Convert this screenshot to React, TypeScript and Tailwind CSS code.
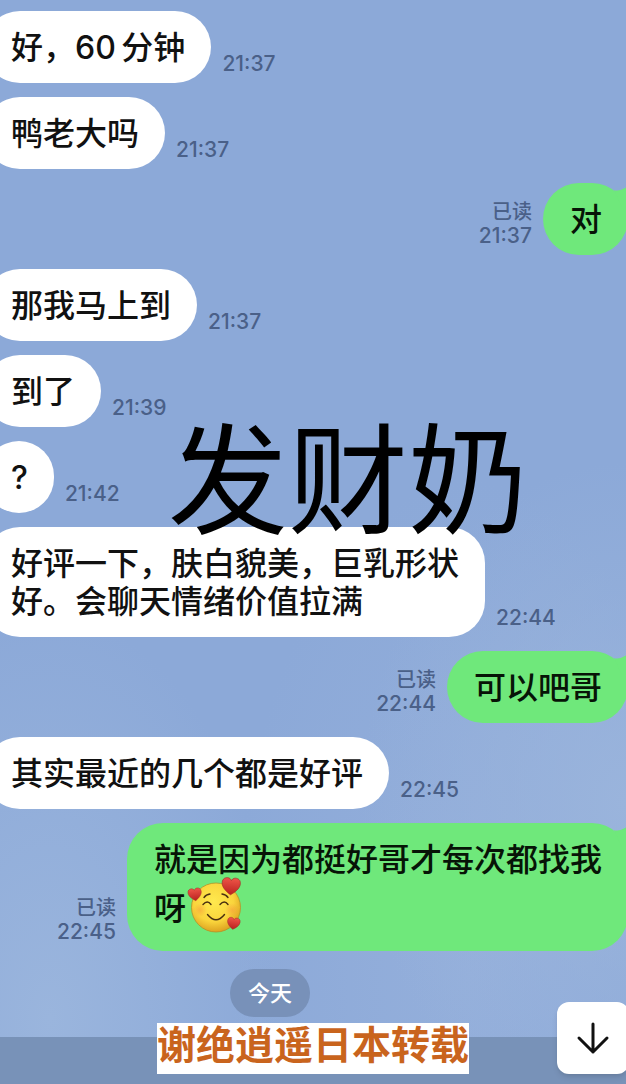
import React from "react";

interface Message {
  text: string;
  time: string;
  mine?: boolean;
  emoji?: boolean;
}

const messages: Message[] = [
  { text: "好，60\u2009分钟", time: "21:37" },
  { text: "鸭老大吗", time: "21:37" },
  { text: "对", time: "21:37", mine: true },
  { text: "那我马上到", time: "21:37" },
  { text: "到了", time: "21:39" },
  { text: "?", time: "21:42" },
  { text: "好评一下，肤白貌美，巨乳形状好。会聊天情绪价值拉满", time: "22:44" },
  { text: "可以吧哥", time: "22:44", mine: true },
  { text: "其实最近的几个都是好评", time: "22:45" },
  { text: "就是因为都挺好哥才每次都找我呀", time: "22:45", mine: true, emoji: true },
];

const HEART =
  "M0 6 C-3 4 -7 1 -7 -3 C-7 -6 -5 -7 -3 -7 C-1.500 -7 -0.500 -6 0 -5 C0.500 -6 1.500 -7 3 -7 C5 -7 7 -6 7 -3 C7 1 3 4 0 6 Z";

const LoveEmoji = () => (
  <svg
    viewBox="0 0 56 56"
    className="inline-block w-14 h-14 ml-0.5 overflow-visible align-[-15px]"
    role="img"
    aria-label="smiling face with hearts"
  >
    <defs>
      <radialGradient id="face" cx="0.45" cy="0.38" r="0.62">
        <stop offset="0" stopColor="#ffe94f" />
        <stop offset="0.65" stopColor="#fad53c" />
        <stop offset="1" stopColor="#dda321" />
      </radialGradient>
      <radialGradient id="blush">
        <stop offset="0" stopColor="#f58a3c" stopOpacity="0.45" />
        <stop offset="1" stopColor="#f58a3c" stopOpacity="0" />
      </radialGradient>
      <linearGradient id="heart" x1="0" y1="0" x2="0" y2="1">
        <stop offset="0" stopColor="#ef5648" />
        <stop offset="1" stopColor="#b9201f" />
      </linearGradient>
    </defs>
    <circle cx="28" cy="28.500" r="24.500" fill="url(#face)" stroke="#b3922a" strokeWidth="0.800" />
    <circle cx="12" cy="31" r="7" fill="url(#blush)" />
    <circle cx="44" cy="31" r="7" fill="url(#blush)" />
    <g fill="none" stroke="#4a3010" strokeWidth="1.400" strokeLinecap="round">
      <path d="M15 25.500 Q19.500 20.500 23 25.500" />
      <path d="M32 25.500 Q36.500 20.500 40 25.500" />
      <path d="M16 18.500 Q18 15.500 22 15" />
      <path d="M34 15 Q38 15.500 40 18.500" />
      <path d="M19.500 35.500 Q28 46 36.500 35.500" />
    </g>
    <g fill="url(#heart)" stroke="#a32824" strokeWidth="0.500">
      <path d={HEART} transform="translate(7 16) rotate(-8) scale(0.950)" />
      <path d={HEART} transform="translate(43 8) rotate(4) scale(1.300)" />
      <path d={HEART} transform="translate(45.500 45) rotate(8) scale(0.900)" />
    </g>
  </svg>
);

const BubbleTail = () => (
  <svg viewBox="0 0 14 20" className="absolute top-1 right-0 w-3.5 h-5" aria-hidden="true">
    <path d="M0 3 Q5 5 13 0 H14 V20 H8 Z" fill="#6fe87b" />
  </svg>
);

const Bubble = ({ message }: { message: Message }) => (
  <p
    className={`relative max-w-[501px] rounded-[36px] pl-[27px] pr-[26px] pt-[18px] pb-4 text-[32px] leading-[38px] font-medium ${
      message.mine ? "bg-[#6fe87b] text-[#071407]" : "bg-white text-[#111111]"
    }`}
  >
    {message.text}
    {message.emoji && <LoveEmoji />}
    {message.mine && <BubbleTail />}
  </p>
);

const MessageRow = ({ message }: { message: Message }) => (
  <li
    className={`flex items-end gap-[11px] ${
      message.mine ? "flex-row-reverse -mr-[2px]" : "-ml-4"
    }`}
  >
    <Bubble message={message} />
    <div className="shrink-0 pb-[7px] text-right text-[21px] leading-6 font-medium text-[#4a6088]">
      {message.mine && <div className="text-[20px]">已读</div>}
      <time>{message.time}</time>
    </div>
  </li>
);

const App = () => {
  return (
    <div
      lang="zh-CN"
      className="relative flex flex-col min-h-screen overflow-hidden bg-[#8ca9d8] bg-[radial-gradient(ellipse_at_100%_74%,#9ab4dc_0%,transparent_30%),radial-gradient(ellipse_at_8%_94%,#9ab5dd_0%,transparent_28%),radial-gradient(ellipse_at_75%_90%,#94afdb_0%,transparent_36%)] font-['Inter','Noto_Sans_CJK_SC',sans-serif]"
    >
      <main className="grow pt-[11px] pb-5">
        <ol className="flex flex-col gap-[14px]">
          {messages.map((message, i) => (
            <MessageRow key={i} message={message} />
          ))}
        </ol>

        {/* Day divider */}
        <div className="flex justify-center mt-[18px] pr-[86px]">
          <span className="rounded-full bg-[#7891b9] px-[18px] py-3 text-[22px] leading-6 font-medium text-white">
            今天
          </span>
        </div>
      </main>

      <footer className="h-[47px] bg-[#7892b8]" />

      {/* Captions lying over the chat */}
      <div className="absolute top-[422px] left-[168px] text-[120px] leading-[120px] whitespace-nowrap text-black">
        发财奶
      </div>
      <div className="absolute bottom-[10px] left-1/2 -translate-x-1/2 bg-white pb-[7px] text-[39px] leading-[44px] font-bold whitespace-nowrap text-[#c9641d]">
        谢绝逍遥日本转载
      </div>

      <button
        type="button"
        aria-label="Scroll to latest"
        className="absolute bottom-[10px] -right-[3px] flex items-center justify-center size-[72px] rounded-xl bg-white shadow-md"
      >
        <svg
          viewBox="0 0 36 36"
          className="size-9"
          fill="none"
          stroke="#111111"
          strokeWidth="3"
          strokeLinecap="round"
          strokeLinejoin="round"
        >
          <path d="M18 4 V32 M4 18 L18 32 L32 18" />
        </svg>
      </button>
    </div>
  );
};

export default App;
